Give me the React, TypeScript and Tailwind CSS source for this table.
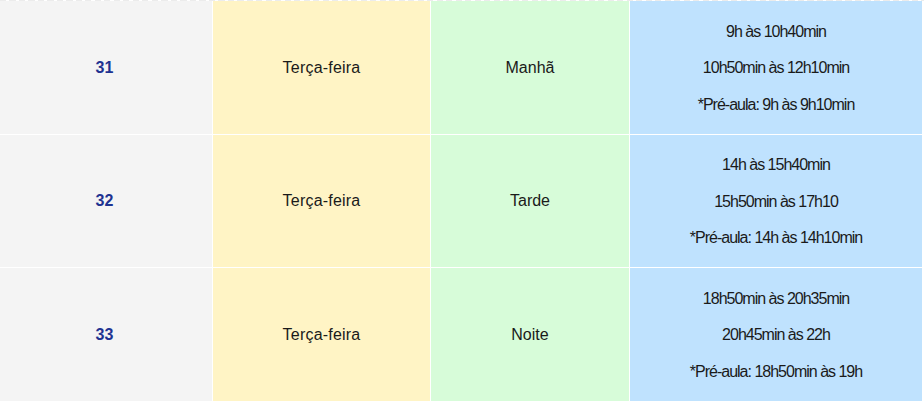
const rows = [
  {
    id: 31,
    day: "Terça-feira",
    period: "Manhã",
    times: ["9h às 10h40min", "10h50min às 12h10min", "*Pré-aula: 9h às 9h10min"],
    h: "h-[133px]",
  },
  {
    id: 32,
    day: "Terça-feira",
    period: "Tarde",
    times: ["14h às 15h40min", "15h50min às 17h10", "*Pré-aula: 14h às 14h10min"],
    h: "h-[132px]",
  },
  {
    id: 33,
    day: "Terça-feira",
    period: "Noite",
    times: ["18h50min às 20h35min", "20h45min às 22h", "*Pré-aula: 18h50min às 19h"],
    h: "h-[133px]",
  },
];

export default function App() {
  return (
    <div className="w-[924px] h-[401px] overflow-hidden bg-white font-['Liberation_Sans',Arial,sans-serif] text-[16px] text-[#1a1a1a]">
      <div className="h-px bg-[repeating-linear-gradient(90deg,#ececec_0_6px,#ffffff_6px_9.5px)]" />
      <div className="grid grid-cols-[212px_217px_198px_292px] gap-px pr-[2px]">
        {rows.map((row) => (
          <div key={row.id} className="contents">
            <div className={`${row.h} flex items-center justify-center bg-[#f4f4f4] pr-[3px] font-bold text-[#1e3391]`}>
              {row.id}
            </div>
            <div className={`${row.h} flex items-center justify-center bg-[#fff4c5] tracking-[0.2px]`}>{row.day}</div>
            <div className={`${row.h} flex items-center justify-center bg-[#d7fcd9]`}>{row.period}</div>
            <div className={`${row.h} flex flex-col items-center justify-center bg-[#bfe2fe] pt-[2px] tracking-[-1px]`}>
              {row.times.map((t) => (
                <p key={t} className="leading-[36.5px]">
                  {t}
                </p>
              ))}
            </div>
          </div>
        ))}
      </div>
    </div>
  );
}
